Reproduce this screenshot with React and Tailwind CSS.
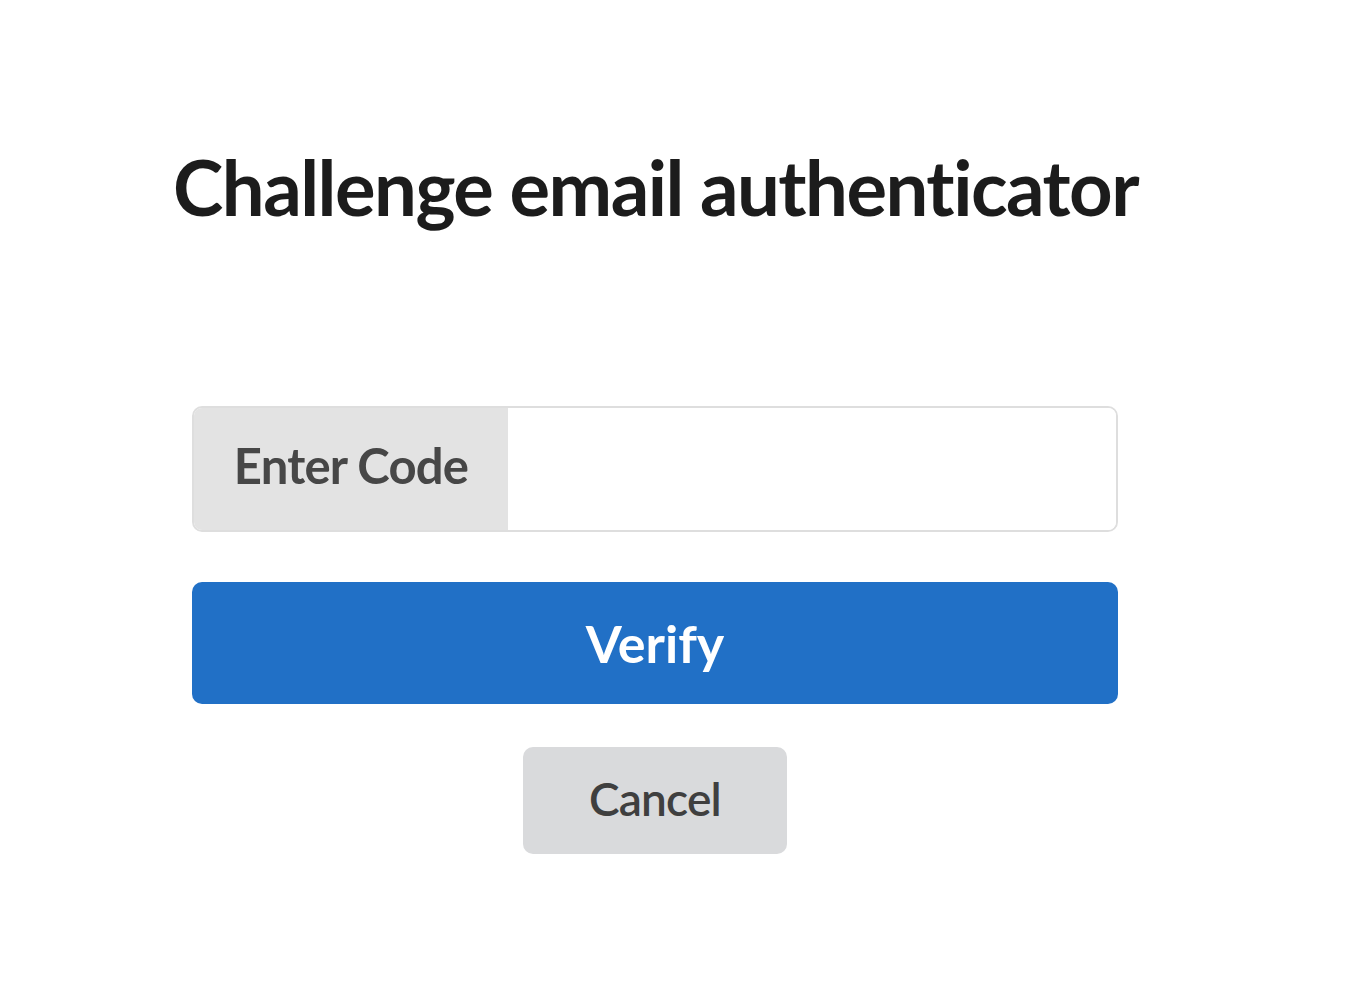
export default function App() {
  return (
    <div className="min-h-screen bg-white font-['Lato','Liberation_Sans',sans-serif]">
      {/* Heading */}
      <div className="pl-[173px] pt-[149px]">
        <h1 className="text-[76px] leading-none font-bold text-[#1c1c1c] tracking-[-1.5px]">
          Challenge email authenticator
        </h1>
      </div>

      {/* Form */}
      <div className="ml-[192px] w-[926px] mt-[181px]">
        <div className="flex h-[126px] rounded-[10px] border-2 border-[#dedede] overflow-hidden">
          <span className="w-[314px] bg-[#e3e3e3] flex items-center justify-center pb-[8px] text-[49px] leading-none font-bold text-[#474747] tracking-[-0.8px]">
            Enter Code
          </span>
          <input type="text" className="flex-1 bg-white outline-none px-6 text-[40px]" />
        </div>

        <button className="mt-[50px] w-full h-[122px] rounded-[10px] bg-[#2170c6] text-white text-[52px] leading-none font-bold flex items-center justify-center">
          Verify
        </button>

        <div className="flex justify-center mt-[43px]">
          <button className="w-[264px] h-[107px] rounded-[10px] bg-[#d9dadc] text-[#3f3f3f] text-[46px] leading-none font-semibold tracking-[-0.8px] flex items-center justify-center pb-[4px]">
            Cancel
          </button>
        </div>
      </div>
    </div>
  );
}
